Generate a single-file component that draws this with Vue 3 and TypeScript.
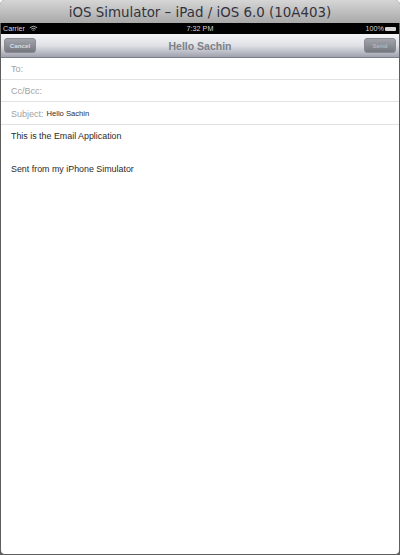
<script setup lang="ts">
const fields = [
  { label: 'To:', value: '' },
  { label: 'Cc/Bcc:', value: '' },
  { label: 'Subject:', value: 'Hello Sachin' },
]
</script>

<template>
  <div class="window">
    <div class="titlebar">iOS Simulator – iPad / iOS 6.0 (10A403)</div>
    <div class="screen">
      <div class="status">
        <div class="status__left">
          <span>Carrier</span>
          <svg class="wifi" width="9" height="7" viewBox="0 0 11 8" fill="none" stroke="#d8d8d8" stroke-width="1">
            <path d="M1 3 Q5.5 -0.6 10 3" />
            <path d="M2.8 4.8 Q5.5 2.6 8.2 4.8" />
            <path d="M4.4 6.4 Q5.5 5.6 6.6 6.4" />
          </svg>
        </div>
        <span class="status__time">7:32 PM</span>
        <div class="status__right">
          <span>100%</span>
          <span class="battery"></span>
        </div>
      </div>
      <div class="navbar">
        <span class="btn">Cancel</span>
        <span class="navbar__title">Hello Sachin</span>
        <span class="btn btn--send">Send</span>
      </div>
      <div class="fields">
        <div v-for="f in fields" :key="f.label" class="field">
          <span class="field__label">{{ f.label }}</span>
          <span class="field__value">{{ f.value }}</span>
        </div>
      </div>
      <div class="body">
        <p>This is the Email Application</p>
        <p class="sig">Sent from my iPhone Simulator</p>
      </div>
    </div>
  </div>
</template>

<style>
body {
  margin: 0;
  background: #fff;
}
</style>

<style scoped>
.window {
  width: 400px;
  height: 555px;
  box-sizing: border-box;
  display: flex;
  flex-direction: column;
  background: #5e5e5e;
  font-family: "Liberation Sans", Arial, sans-serif;
  overflow: hidden;
  border-radius: 5px 5px 0 0;
}

.titlebar {
  height: 23px;
  flex-shrink: 0;
  background: linear-gradient(#d6d6d6, #a9a9a9);
  color: #33333d;
  font-family: "DejaVu Sans", sans-serif;
  font-size: 13.4px;
  line-height: 25px;
  text-align: center;
  white-space: nowrap;
}

.screen {
  flex: 1;
  margin: 0 1px 1px;
  display: flex;
  flex-direction: column;
  background: #fff;
  border-radius: 0 0 4px 4px;
  overflow: hidden;
}

.status {
  height: 11px;
  flex-shrink: 0;
  background: #000;
  color: #d4d4d4;
  font-size: 7.2px;
  line-height: 11px;
  display: flex;
  justify-content: space-between;
  padding: 0 3px 0 2px;
  position: relative;
}

.status__left,
.status__right {
  display: flex;
  align-items: center;
  gap: 4px;
}

.status__right {
  gap: 1px;
}

.status__time {
  position: absolute;
  left: 0;
  right: 0;
  text-align: center;
}

.battery {
  width: 11px;
  height: 4px;
  background: #d4d4d4;
  border-radius: 1px;
}

.navbar {
  height: 23px;
  flex-shrink: 0;
  display: flex;
  align-items: center;
  justify-content: space-between;
  padding: 0 3px;
  background: linear-gradient(#f4f5f7, #dfe1e6 50%, #9ea2ae);
  border-bottom: 1px solid #7c7f8a;
}

.navbar__title {
  color: #7c8087;
  font-size: 10.5px;
  font-weight: 700;
}

.btn {
  width: 32px;
  height: 15px;
  box-sizing: border-box;
  border-radius: 3px;
  background: linear-gradient(#a2a5ab, #74777e);
  border: 1px solid #888b92;
  color: #dcdee2;
  font-size: 6.2px;
  font-weight: 700;
  line-height: 13px;
  text-align: center;
}

.btn--send {
  color: #b2b6bd;
}

.field {
  height: 22px;
  box-sizing: border-box;
  display: flex;
  align-items: center;
  gap: 3px;
  padding-left: 10px;
  border-bottom: 1px solid #e2e2e2;
  font-size: 9px;
}

.field:last-child {
  height: 23px;
  padding-top: 1px;
}

.field__label {
  color: #a2a2a2;
}

.field__value {
  color: #222;
  font-size: 7.6px;
  opacity: 0.95;
}

.body {
  padding: 6px 10px;
  color: #2a2a2a;
  font-size: 8.9px;
  line-height: 11px;
}

.body p {
  margin: 0;
}

.sig {
  padding-top: 22px;
}
</style>
